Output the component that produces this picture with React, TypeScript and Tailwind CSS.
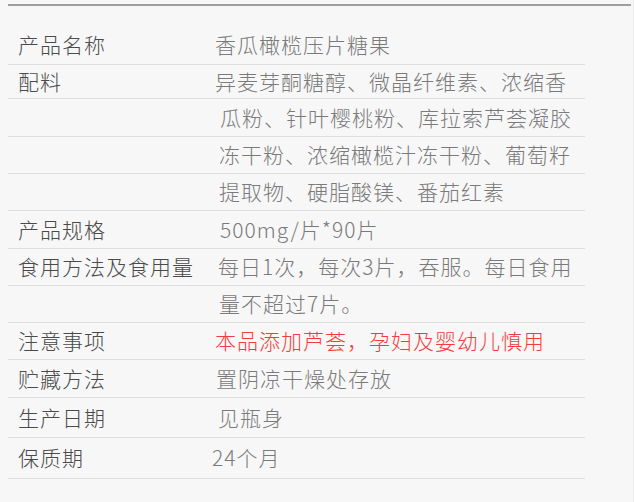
const rows: { label: string; value: string; h: string; indent?: string; red?: boolean }[] = [
  { label: "产品名称", value: "香瓜橄榄压片糖果", h: "h-[40px]" },
  { label: "配料", value: "异麦芽酮糖醇、微晶纤维素、浓缩香", h: "h-[34px]" },
  { label: "", value: "瓜粉、针叶樱桃粉、库拉索芦荟凝胶", h: "h-[38px]", indent: "pl-[5px]" },
  { label: "", value: "冻干粉、浓缩橄榄汁冻干粉、葡萄籽", h: "h-[37px]", indent: "pl-[4px]" },
  { label: "", value: "提取物、硬脂酸镁、番茄红素", h: "h-[37px]", indent: "pl-[4px]" },
  { label: "产品规格", value: "500mg/片*90片", h: "h-[38px]", indent: "pl-[5px]" },
  { label: "食用方法及食用量", value: "每日1次，每次3片，吞服。每日食用", h: "h-[37px]", indent: "pl-[3px]" },
  { label: "", value: "量不超过7片。", h: "h-[37px]", indent: "pl-[4px]" },
  { label: "注意事项", value: "本品添加芦荟，孕妇及婴幼儿慎用", h: "h-[37px]", red: true },
  { label: "贮藏方法", value: "置阴凉干燥处存放", h: "h-[38px]", indent: "pl-[1px]" },
  { label: "生产日期", value: "见瓶身", h: "h-[40px]", indent: "pl-[3px]" },
  { label: "保质期", value: "24个月", h: "h-[41px]", indent: "-ml-[3px]" },
];

export default function App() {
  return (
    <div
      className="w-[634px] h-[502px] bg-[#f7f7f7] pt-[4px] border-r border-[#ececec]"
      style={{ fontFamily: '"Noto Sans CJK SC", "Noto Sans", sans-serif' }}
    >
      <div className="ml-2 mr-[2px] border-t-2 border-[#9e9e9e]" />
      <div className="ml-2 w-[577px] mt-[19px]">
        {rows.map((r, i) => (
          <div key={i} className={`grid grid-cols-[207px_1fr] items-center border-b border-[#dedede] ${r.h}`}>
            <div className="pl-[10px] text-[21px] font-light tracking-[1px] text-[#4a4a4a] whitespace-nowrap">
              {r.label}
            </div>
            <div
              className={`text-[21px] font-light tracking-[1px] whitespace-nowrap ${r.indent ?? ""} ${
                r.red ? "text-[#f43b3b]" : "text-[#7a7a7a]"
              }`}
            >
              {r.value}
            </div>
          </div>
        ))}
      </div>
    </div>
  );
}
